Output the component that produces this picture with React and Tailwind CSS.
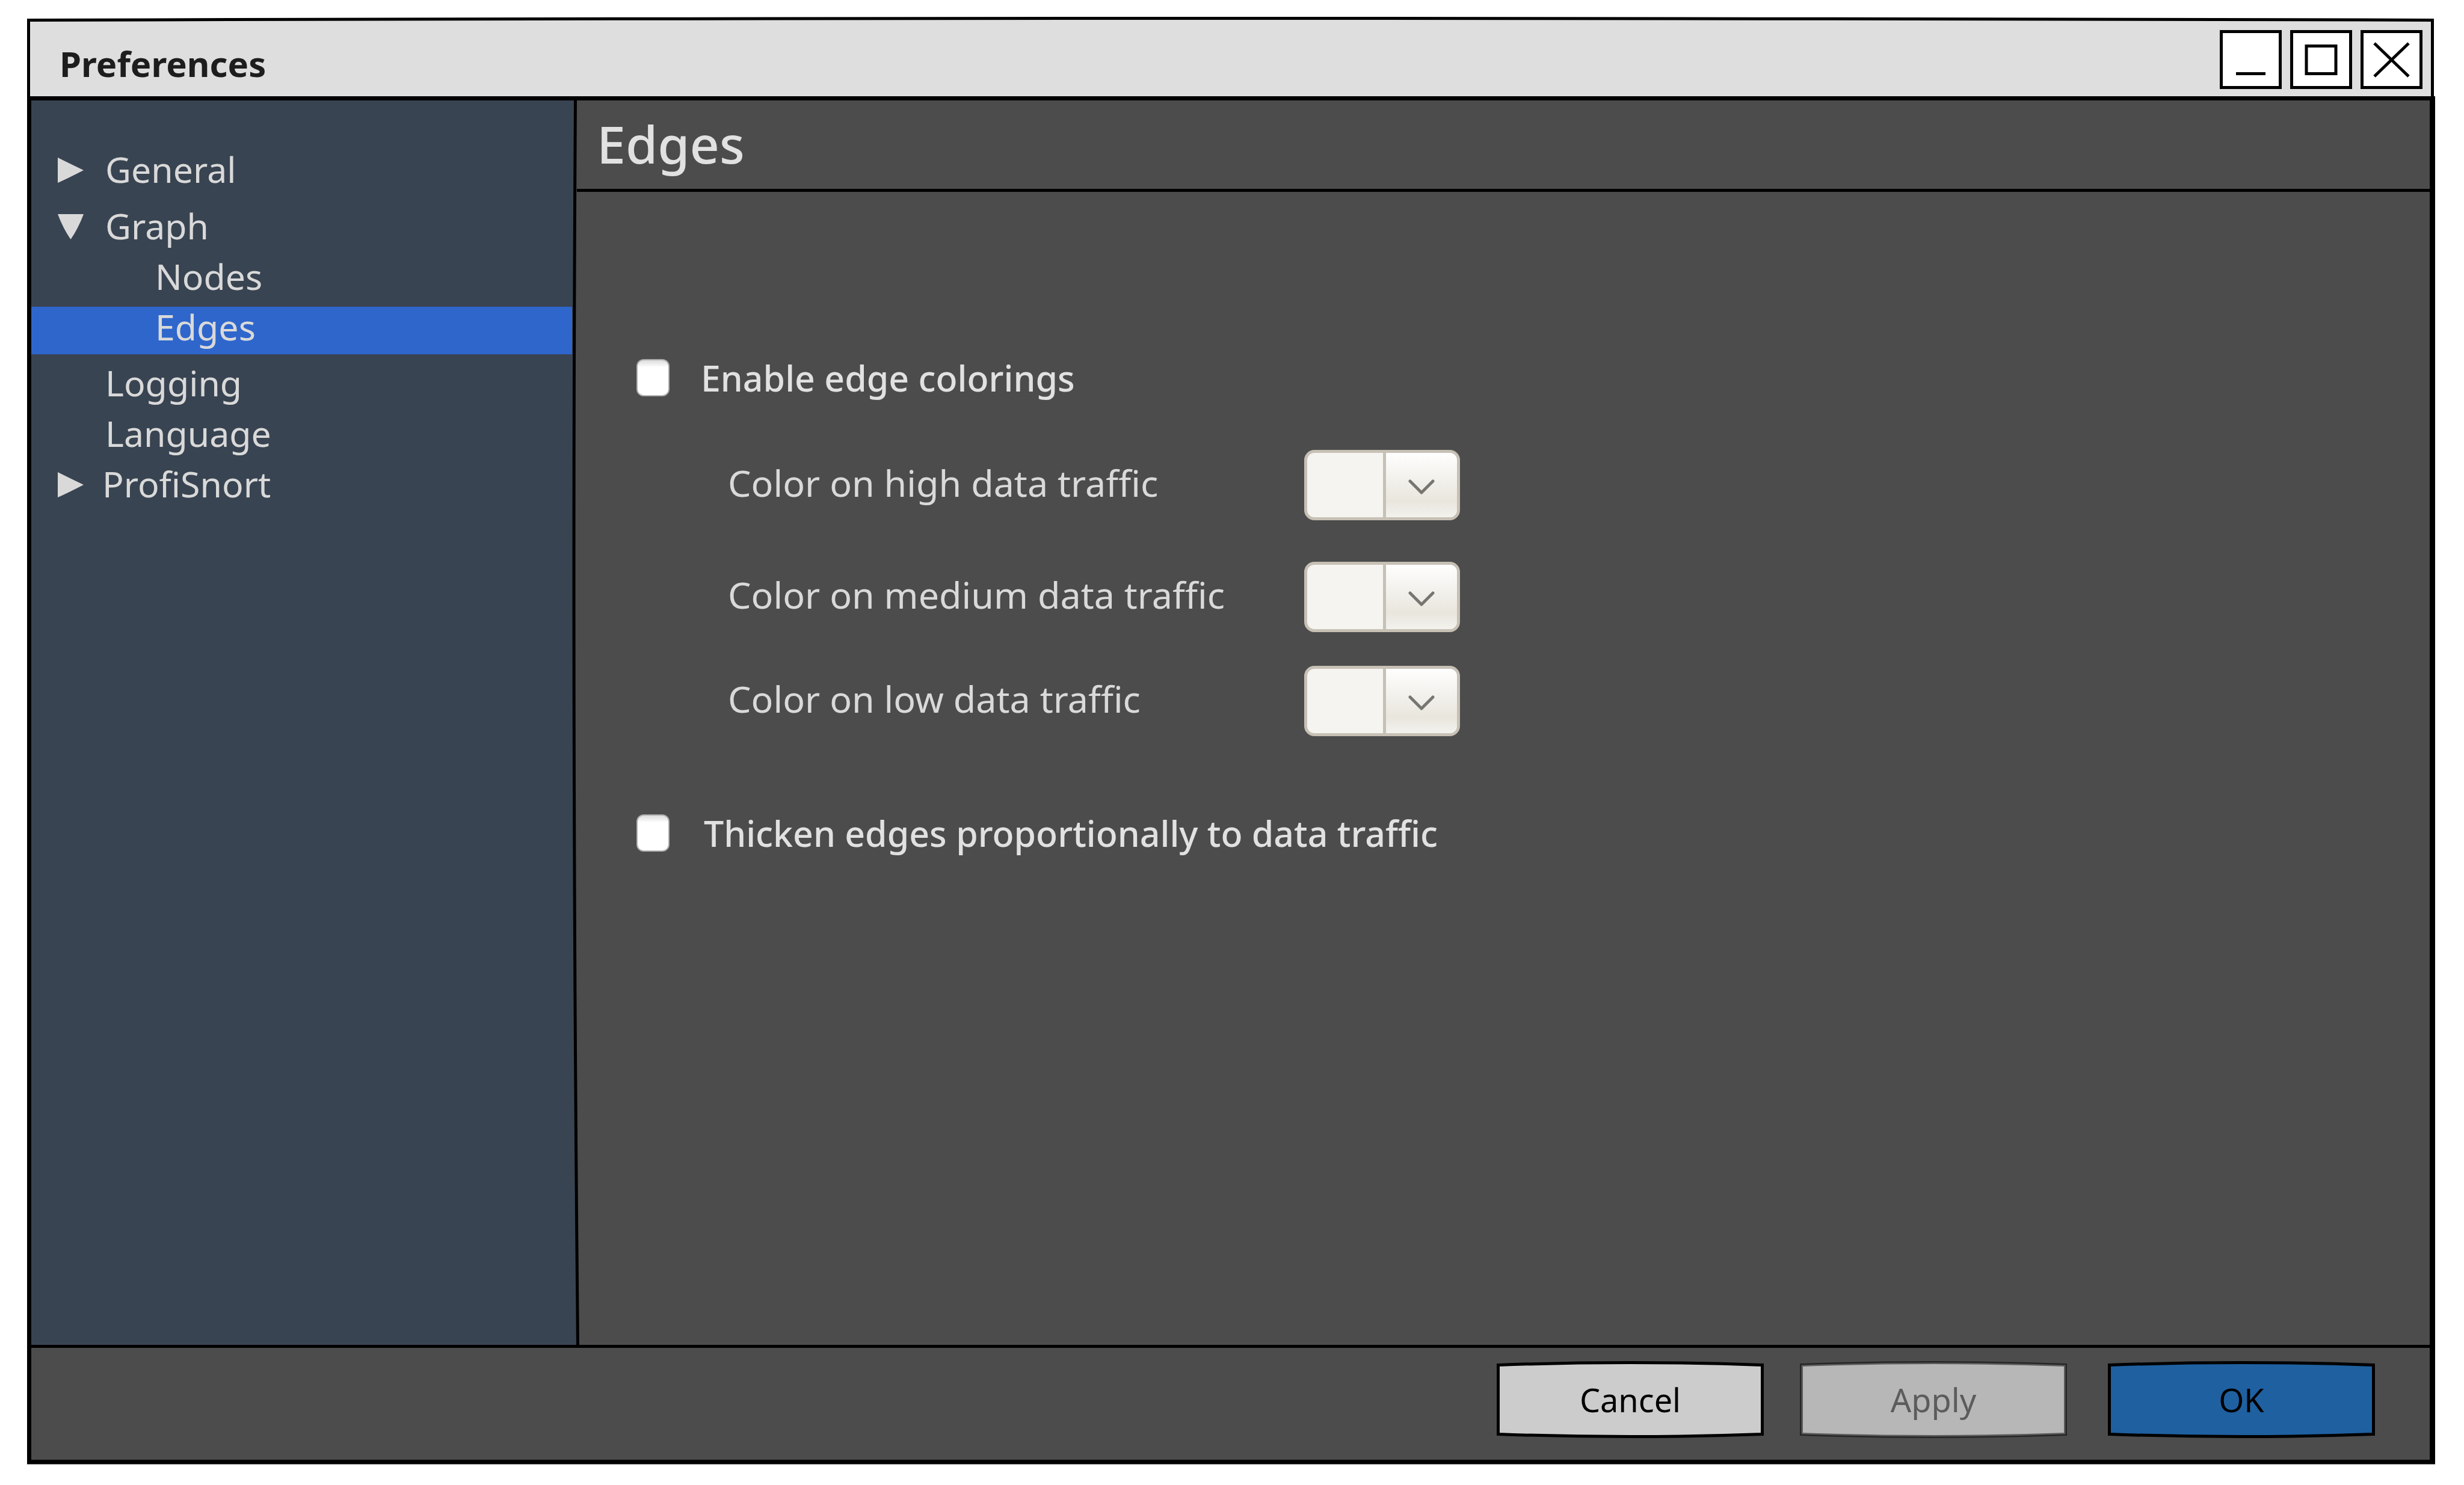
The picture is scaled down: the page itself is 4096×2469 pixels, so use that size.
import React from "react";

function Disclosure({ open }) {
  return (
    <svg viewBox="0 0 43 46" className="h-[46px] w-[43px] shrink-0 fill-[#d9d9d9]" aria-hidden="true">
      {open ? (
        <path d="M0 4H43Q34 28 21.500 46Q9 28 0 4Z" />
      ) : (
        <path d="M0 4Q18 13 43 25Q18 38 0 46Z" />
      )}
    </svg>
  );
}

function TreeItem({ label, branch, open, tight }) {
  return (
    <button
      type="button"
      aria-expanded={branch ? !!open : undefined}
      className={
        "flex h-[84px] items-center pl-[44px] text-left " + (tight ? "gap-[31px]" : "gap-[36px]")
      }
    >
      {branch ? <Disclosure open={open} /> : <span className="w-[43px]" />}
      {label}
    </button>
  );
}

function WindowButton({ label, children }) {
  return (
    <button
      type="button"
      aria-label={label}
      className="flex h-[98px] w-[103px] items-center justify-center border-[5px] border-black bg-white"
    >
      <svg viewBox="0 0 93 88" className="h-[88px] w-[93px] fill-none stroke-black stroke-[5]" aria-hidden="true">
        {children}
      </svg>
    </button>
  );
}

function CheckRow({ id, label, wide }) {
  return (
    <div className={"flex h-[84px] items-center pl-[95px] " + (wide ? "gap-[57px]" : "gap-[52px]")}>
      <input
        id={id}
        type="checkbox"
        className="h-[62px] w-[55px] shrink-0 appearance-none rounded-[12px] border-[2px] border-[#aeaeae] bg-white bg-linear-to-b from-[#dcdcdc] to-white to-20%"
      />
      <label htmlFor={id} className="text-[59px] leading-[84px] font-medium text-[#e1e1e1]">
        {label}
      </label>
    </div>
  );
}

function ColorRow({ id, label }) {
  return (
    <div className="flex h-[117px] items-center pl-[247px]">
      <label htmlFor={id} className="w-[958px] pb-[8px] text-[61px] leading-[84px] text-[#d9d9d9]">
        {label}
      </label>
      <div className="relative flex h-[117px] w-[259px] overflow-hidden rounded-[17px] border-[5px] border-[#c7c0b5] bg-[#f5f4f0]">
        <span className="flex-1 border-r-[5px] border-[#c7c0b5]" />
        <span className="flex w-[118px] items-center justify-center bg-linear-to-b from-[#fefefe] via-[#e9e6dd] via-75% to-[#f3f2ee] pt-[7px]">
          <svg viewBox="0 0 44 26" className="h-[26px] w-[44px] fill-none stroke-[#777671] stroke-[5]" strokeLinecap="round" strokeLinejoin="round" aria-hidden="true">
            <path d="M3 3L22 22L41 3" />
          </svg>
        </span>
        <select id={id} className="absolute inset-0 appearance-none bg-transparent">
          <option value="" />
        </select>
      </div>
    </div>
  );
}

function FooterButton({ label, fill, text, disabled }) {
  return (
    <button
      type="button"
      disabled={disabled}
      className={"relative h-[128px] w-[444px] text-[54px] leading-[72px] " + text}
    >
      <svg viewBox="0 0 444 128" preserveAspectRatio="none" className={"absolute inset-0 size-full stroke-black stroke-[5] " + fill} aria-hidden="true">
        <path d="M2.500 6.500Q222 -1.500 441.500 6.500V121.500Q222 129.500 2.500 121.500Z" strokeOpacity={disabled ? 0.5 : 1} />
      </svg>
      <span className="relative">{label}</span>
    </button>
  );
}

export default function App() {
  return (
    <div className="flex min-h-screen flex-col bg-white pt-[28px] pb-[30px] pl-[45px] font-['Noto_Sans',sans-serif]">
      <header className="mr-[50px]">
        <svg viewBox="0 0 4001 8" preserveAspectRatio="none" className="block h-[8px] w-full" aria-hidden="true">
          <path d="M0 8V3Q2000 -3 4001 3V8Z" fill="#000" />
          <path d="M5 8Q2000 2 3996 8Z" fill="#dedede" />
        </svg>
        <div className="flex h-[124px] items-center justify-between border-x-[5px] border-black bg-[#dedede] pr-[14px] pl-[49px]">
          <h1 className="pt-[16px] text-[58px] leading-[80px] font-bold text-[#1d1d1d]">Preferences</h1>
          <div className="flex gap-[14px] pt-[2px]">
            <WindowButton label="Minimize">
              <path d="M22 67.500H71" />
            </WindowButton>
            <WindowButton label="Maximize">
              <path d="M22 21.500H71V67.500H22Z" />
            </WindowButton>
            <WindowButton label="Close">
              <path d="M18 17L75 72M75 17L18 72" />
            </WindowButton>
          </div>
        </div>
      </header>

      <div className="mr-[48px] flex flex-1 flex-col border-t-[7px] border-r-[9px] border-b-[5px] border-l-[7px] border-black bg-[#4c4c4c]">
        <div className="flex flex-1">
          <nav aria-label="Preference pages" className="flex w-[899px] shrink-0 flex-col bg-[#394452] pt-[72px] text-[59px] leading-[79px] text-[#d9d9d9]">
            <TreeItem label="General" branch />
            <div className="h-[10px]" />
            <TreeItem label="Graph" branch open />
            <button type="button" className="flex h-[84px] items-center pl-[206px]">Nodes</button>
            <button type="button" aria-current="page" className="mt-[9px] mb-[5px] flex h-[79px] items-center bg-[#2e66cc] pb-[13px] pl-[206px]">
              Edges
            </button>
            <TreeItem label="Logging" />
            <TreeItem label="Language" />
            <TreeItem label="ProfiSnort" branch tight />
          </nav>
          <div className="relative w-[12px] shrink-0">
            <svg viewBox="0 0 12 2069" preserveAspectRatio="none" className="absolute inset-0 size-full" aria-hidden="true">
              <path d="M0 0H5.500Q-1 1034 9.500 2069H0Z" fill="#394452" />
              <path d="M5.500 0Q-1 1034 9.500 2069" fill="none" stroke="#000" strokeWidth="5" />
            </svg>
          </div>
          <main className="flex flex-1 flex-col">
            <div className="-ml-[4px] flex h-[152px] items-center border-b-[5px] border-black pb-[3px] pl-[33px]">
              <h2 className="text-[86px] leading-[120px] font-medium text-[#e1e1e1]">Edges</h2>
            </div>
            <div className="flex flex-col pt-[267px]">
              <CheckRow id="enable-colors" label="Enable edge colorings" />
              <div className="flex flex-col pt-[78px] pb-[119px]">
                <ColorRow id="color-high" label="Color on high data traffic" />
                <div className="h-[69px]" />
                <ColorRow id="color-medium" label="Color on medium data traffic" />
                <div className="h-[56px]" />
                <ColorRow id="color-low" label="Color on low data traffic" />
              </div>
              <CheckRow id="thicken" label="Thicken edges proportionally to data traffic" wide />
            </div>
          </main>
        </div>
        <footer className="flex h-[191px] justify-end border-t-[5px] border-black pt-[22px] pr-[91px]">
          <div className="mr-[60px]">
            <FooterButton label="Cancel" fill="fill-[#cccccc]" text="text-black" />
          </div>
          <div className="mr-[68px]">
            <FooterButton label="Apply" fill="fill-[#b7b7b7]" text="text-[#5c5c5c]" disabled />
          </div>
          <FooterButton label="OK" fill="fill-[#1f60a0]" text="text-black" />
        </footer>
      </div>
      <div className="mr-[48px]">
        <svg viewBox="0 0 4003 7" preserveAspectRatio="none" className="block h-[7px] w-full" aria-hidden="true">
          <path d="M0 0Q2001 8 4003 0" fill="none" stroke="#000" strokeWidth="5" />
        </svg>
      </div>
    </div>
  );
}
